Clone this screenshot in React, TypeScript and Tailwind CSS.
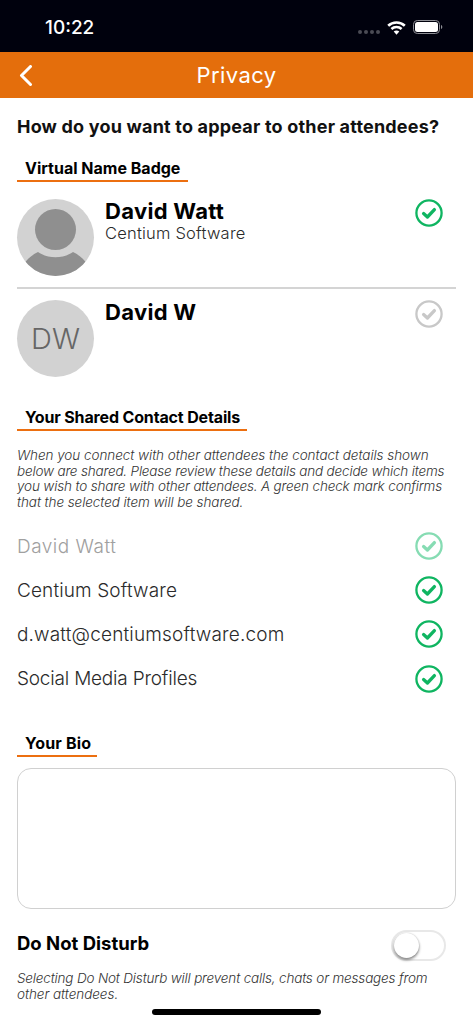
const font = { fontFamily: '"Inter", "Liberation Sans", sans-serif' };

function Check({ color = "#0fb561", className = "" }: { color?: string; className?: string }) {
  return (
    <svg width="28" height="28" viewBox="0 0 28 28" fill="none" className={className}>
      <circle cx="14" cy="14" r="12.6" stroke={color} strokeWidth="2.300" />
      <path d="M8.6 14.600 L12.400 18 L19.400 10.600" stroke={color} strokeWidth="3.300" strokeLinecap="round" strokeLinejoin="round" />
    </svg>
  );
}

function Heading({ children, className }: { children: string; className: string }) {
  return (
    <div className={`${className} border-b-2 border-[#ec6f10] pl-2 pb-[2px] text-[16px] leading-[20px] font-bold text-black`}>
      {children}
    </div>
  );
}

function Row({ label, muted, className }: { label: string; muted?: boolean; className: string }) {
  return (
    <div className="flex h-[44.2px] items-center justify-between pr-[13px]">
      <span className={`pt-[2px] text-[19px] font-light ${className} ${muted ? "text-[#a0a0a0]" : "text-[#2a2a2a]"}`}>{label}</span>
      <Check color={muted ? "#86dcb3" : "#0fb561"} />
    </div>
  );
}

export default function App() {
  return (
    <div style={font} className="relative h-[1024px] w-[473px] overflow-hidden bg-white">
      <div className="relative flex h-[52px] items-center justify-between bg-[#00010d] pt-[2px] pr-[30px] pl-[45px] text-white">
        <span className="text-[19px] font-medium leading-none">10:22</span>
        <div className="flex items-center gap-[7px]">
          <div className="mt-[10px] flex gap-[2px]">
            <i className="h-[4px] w-[4px] rounded-full bg-[#4a4b54]" />
            <i className="h-[4px] w-[4px] rounded-full bg-[#4a4b54]" />
            <i className="h-[4px] w-[4px] rounded-full bg-[#4a4b54]" />
            <i className="h-[4px] w-[4px] rounded-full bg-[#4a4b54]" />
          </div>
          <svg width="19" height="14" viewBox="0 0 19 14" fill="none" className="mt-[1px]">
            <path d="M1.200 4.800 C5.800 0.300 13.200 0.300 17.800 4.800" stroke="white" strokeWidth="2.600" />
            <path d="M4.400 8 C7.200 5.300 11.800 5.300 14.600 8" stroke="white" strokeWidth="2.600" />
            <path d="M6.700 10.600 C8.300 9.200 10.700 9.200 12.300 10.600 L9.500 13.800 Z" fill="white" />
          </svg>
          <svg width="30" height="14" viewBox="0 0 30 14" fill="none">
            <rect x=".5" y=".5" width="26" height="13" rx="3.800" stroke="#8d8e94" />
            <rect x="2" y="2" width="23" height="10" rx="2.500" fill="white" />
            <path d="M28 5v4c.8-.3 1.300-1.100 1.300-2S28.800 5.300 28 5z" fill="#8d8e94" />
          </svg>
        </div>
      </div>

      <div className="relative flex h-[46px] items-center justify-center bg-[#e46e0c]">
        <svg width="14" height="22" viewBox="0 0 14 22" fill="none" className="absolute left-[19px] top-[13px]">
          <path d="M11.500 1.500 L2.500 10.500 L11.500 19.500" stroke="white" strokeWidth="3" strokeLinecap="round" strokeLinejoin="round" />
        </svg>
        <span className="text-[22px] leading-none font-normal tracking-[0.4px] text-white">Privacy</span>
      </div>

      <div className="px-[17px]">
        <h1 className="mt-[18px] whitespace-nowrap text-[18px] leading-[22px] font-bold text-[#111] tracking-[0.19px]">How do you want to appear to other attendees?</h1>
        <div className="mt-[20px]">
          <Heading className="w-[171px]">Virtual Name Badge</Heading>
        </div>

        <div className="mt-[17px] flex h-[90px] items-start border-b-2 border-[#d4d4d4]">
          <div className="relative h-[77px] w-[77px] shrink-0 overflow-hidden rounded-full bg-[#d2d2d2]">
            <svg width="77" height="77" viewBox="0 0 77 77" className="absolute inset-0">
              <circle cx="38.500" cy="30.500" r="20.500" fill="#8f8f8f" />
              <path d="M6 66 C10 60 15 56 21 53 C31 60 46 60 56 53 C62 56 67 60 71 66 L71 77 L6 77 Z" fill="#8f8f8f" />
            </svg>
          </div>
          <div className="ml-[11px] flex-1">
            <div className="text-[22px] leading-[24px] font-bold text-black tracking-[0.3px]">David Watt</div>
            <div className="text-[16.500px] leading-[20px] font-light text-[#2a2a2a] tracking-[0.2px]">Centium Software</div>
          </div>
          <Check className="mr-[13px]" />
        </div>

        <div className="mt-[11px] flex items-start">
          <div className="flex h-[77px] w-[77px] shrink-0 items-center justify-center rounded-full bg-[#d2d2d2] text-[29px] font-light text-[#666]">DW</div>
          <div className="ml-[11px] flex-1 text-[22px] leading-[24px] font-bold text-black tracking-[0.3px]">David W</div>
          <Check color="#c8c8c8" className="mr-[13px]" />
        </div>

        <div className="mt-[30px]">
          <Heading className="w-[230px] tracking-[-0.15px]">Your Shared Contact Details</Heading>
        </div>

        <p className="mt-[17px] whitespace-nowrap text-[13.500px] leading-[15.500px] font-light italic text-[#333]">
          <span className="block tracking-[-0.05px]">When you connect with other attendees the contact details shown</span>
          <span className="block tracking-[-0.18px]">below are shared. Please review these details and decide which items</span>
          <span className="block tracking-[-0.16px]">you wish to share with other attendees. A green check mark confirms</span>
          <span className="block tracking-[-0.08px]">that the selected item will be shared.</span>
        </p>

        <div className="mt-[14px]">
          <Row label="David Watt" muted className="tracking-[0.5px]" />
          <Row label="Centium Software" className="tracking-[0.12px]" />
          <Row label="d.watt@centiumsoftware.com" className="tracking-[0.16px]" />
          <Row label="Social Media Profiles" className="tracking-[-0.2px]" />
        </div>

        <div className="mt-[32.500px]">
          <Heading className="w-[80px] tracking-[0.2px]">Your Bio</Heading>
        </div>

        <div className="mt-[11px] h-[141px] rounded-[14px] border-[1.5px] border-[#d0d0d0]" />

        <div className="mt-[21px] flex items-center justify-between pr-[10px]">
          <span className="mb-[5px] text-[18.500px] leading-[24px] font-bold text-black">Do Not Disturb</span>
          <div className="relative h-[31px] w-[55px] rounded-full border-2 border-[#e8e8e8] bg-white">
            <div className="absolute top-[1px] left-[1px] h-[25px] w-[25px] rounded-full bg-white shadow-[0_2px_3px_rgba(0,0,0,0.45),0_0_2px_rgba(0,0,0,0.2)]" />
          </div>
        </div>

        <p className="mt-[10px] whitespace-nowrap text-[13.500px] leading-[15.500px] font-light italic text-[#333]">
          <span className="block tracking-[-0.17px]">Selecting Do Not Disturb will prevent calls, chats or messages from</span>
          <span className="block tracking-[-0.05px]">other attendees.</span>
        </p>
      </div>

      <div className="absolute bottom-[9px] left-[152px] h-[6px] w-[169px] rounded-full bg-black" />
    </div>
  );
}
